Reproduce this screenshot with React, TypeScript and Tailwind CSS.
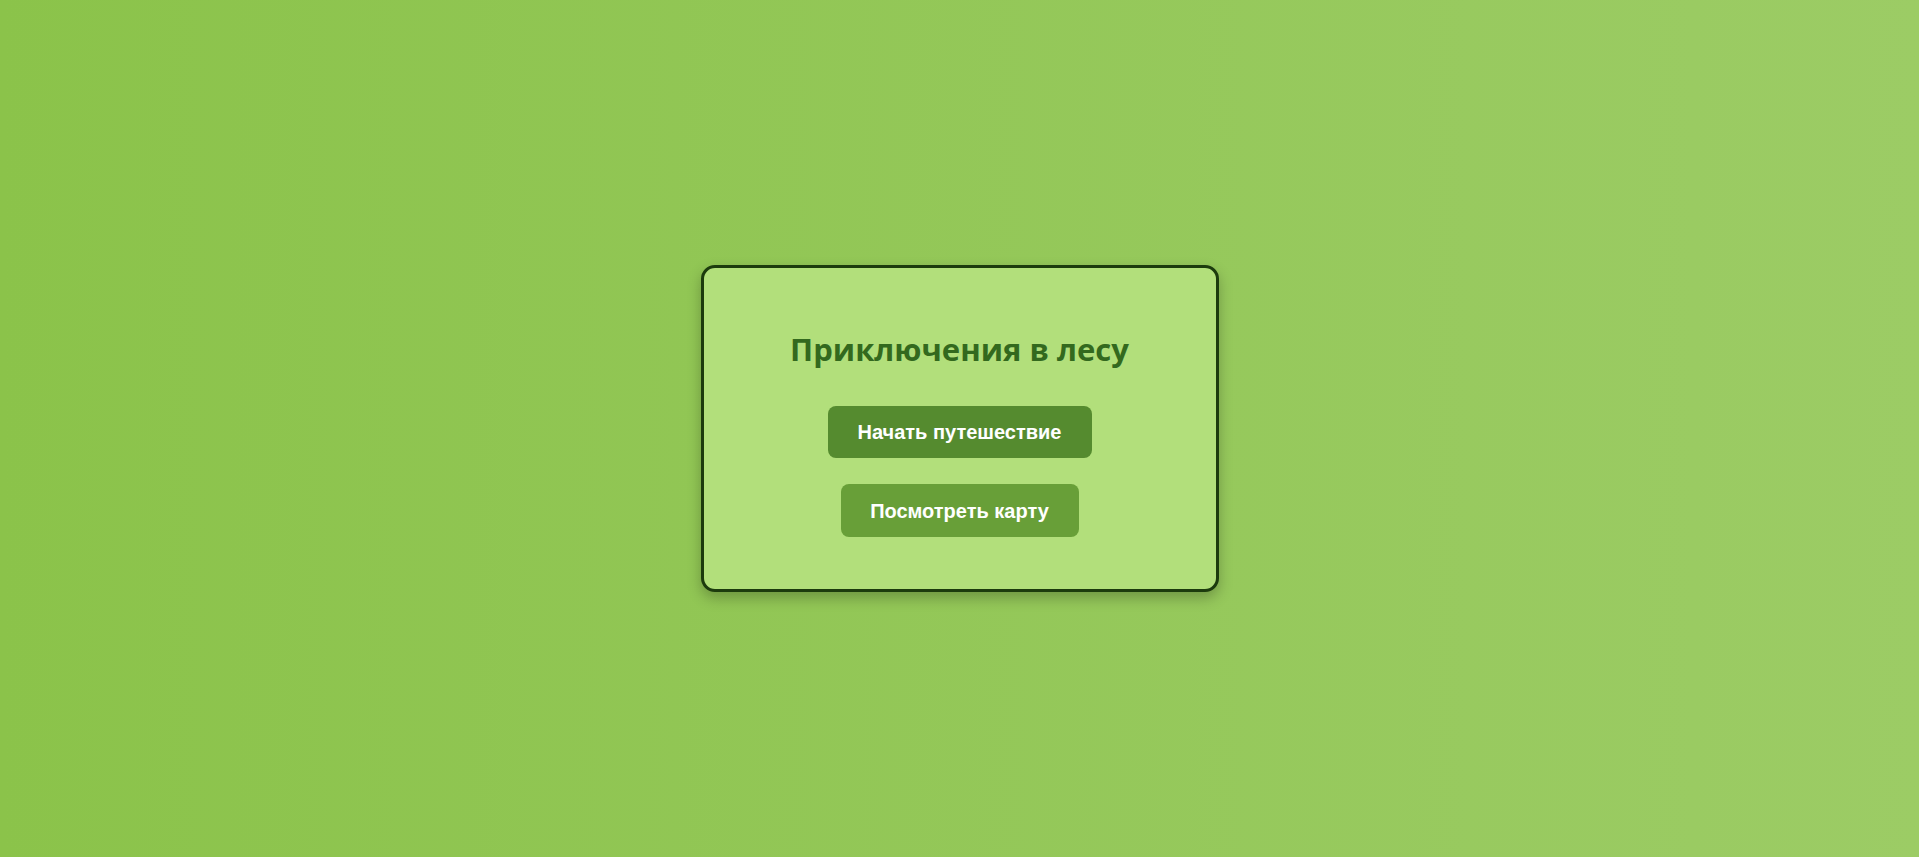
import React from "react";

export default function App() {
  return (
    <div className="h-screen w-full flex items-center justify-center bg-gradient-to-r from-[#8BC34A] to-[#9CCC65]">
      <div className="w-[518px] h-[327px] box-border rounded-[14px] border-[3px] border-[#1c3b0d] bg-[#b2df7b] shadow-[0_6px_14px_rgba(0,0,0,0.25)] flex flex-col items-center pt-[58px]">
        <h1 className="m-0 text-[31px] leading-[46px] font-bold text-[#33691E] [font-family:'Open_Sans',sans-serif]">
          Приключения в лесу
        </h1>
        <button className="mt-[34px] h-[52px] w-[264px] rounded-[8px] bg-[#558B2F] text-white text-[20px] font-bold [font-family:'Liberation_Sans',Arial,sans-serif]">
          Начать путешествие
        </button>
        <button className="mt-[26px] h-[53px] w-[238px] rounded-[8px] bg-[#689F38] text-white text-[20px] font-bold [font-family:'Liberation_Sans',Arial,sans-serif]">
          Посмотреть карту
        </button>
      </div>
    </div>
  );
}
